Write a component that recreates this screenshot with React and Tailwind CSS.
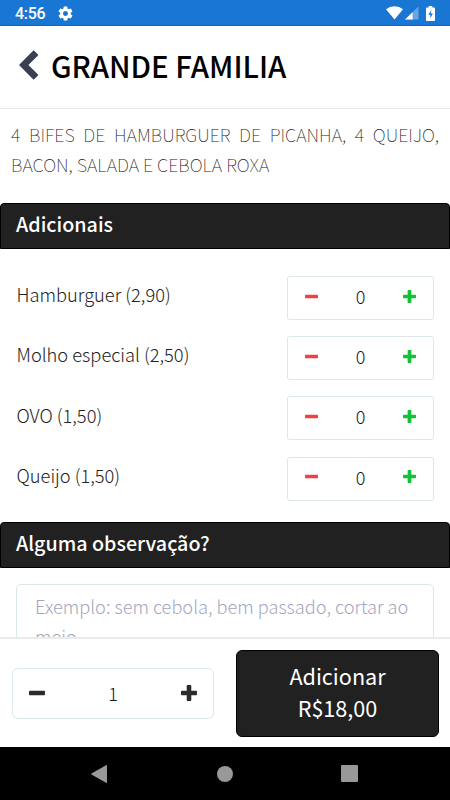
import React, { useState } from 'react';

const ADDONS = [
  { id: 1, name: 'Hamburguer (2,90)' },
  { id: 2, name: 'Molho especial (2,50)' },
  { id: 3, name: 'OVO (1,50)' },
  { id: 4, name: 'Queijo (1,50)' },
];

const MinusIcon = ({ className }) => (
  <svg viewBox="0 0 14 14" className={className} fill="currentColor">
    <rect x="0" y="5" width="14" height="4" rx="0.8" />
  </svg>
);

const PlusIcon = ({ className }) => (
  <svg viewBox="0 0 14 14" className={className} fill="currentColor">
    <path d="M5.8 0h2.4q.8 0 .8.8V5h4.2q.8 0 .8.8v2.4q0 .8-.8.8H9v4.2q0 .8-.8.8H5.8q-.8 0-.8-.8V9H.8Q0 9 0 8.2V5.8Q0 5 .8 5H5V.8Q5 0 5.8 0z" />
  </svg>
);

const StatusBar = () => (
  <div className="h-[26px] shrink-0 bg-[#1976d2] border-b border-[#1565c0] flex items-center text-white">
    <span className="ml-[15px] w-[31px] font-['Roboto'] font-medium text-[16px] leading-none mt-[3px] tracking-[-0.3px]">4:56</span>
    <svg viewBox="0 0 24 24" className="ml-[11px] mt-px w-[17px] h-[17px]" fill="currentColor">
      <path d="M19.43 12.98c.04-.32.07-.64.07-.98s-.03-.66-.07-.98l2.11-1.65c.19-.15.24-.42.12-.64l-2-3.46c-.12-.22-.39-.3-.61-.22l-2.49 1c-.52-.4-1.08-.73-1.69-.98l-.38-2.65C14.46 2.18 14.25 2 14 2h-4c-.25 0-.46.18-.49.42l-.38 2.65c-.61.25-1.17.59-1.69.98l-2.49-1c-.23-.09-.49 0-.61.22l-2 3.46c-.13.22-.07.49.12.64l2.11 1.65c-.04.32-.07.65-.07.98s.03.66.07.98l-2.11 1.65c-.19.15-.24.42-.12.64l2 3.46c.12.22.39.3.61.22l2.49-1c.52.4 1.08.73 1.69.98l.38 2.65c.03.24.24.42.49.42h4c.25 0 .46-.18.49-.42l.38-2.65c.61-.25 1.17-.59 1.69-.98l2.49 1c.23.09.49 0 .61-.22l2-3.46c.12-.22.07-.49-.12-.64l-2.11-1.65zM12 15.5c-1.93 0-3.5-1.57-3.5-3.5s1.57-3.5 3.5-3.5 3.5 1.57 3.5 3.5-1.57 3.5-3.5 3.5z" />
    </svg>
    <div className="ml-auto mr-[15px] mt-px flex items-center">
      <svg viewBox="0 0 17 14" className="w-[17px] h-[14px]" fill="currentColor">
        <path d="M8.5 13.5 0 3.2Q3.6.2 8.5.2T17 3.2z" />
      </svg>
      <svg viewBox="0 0 14 14" className="ml-[2px] w-[14px] h-[14px]" fill="currentColor">
        <path d="M13.5.5v13H0z" opacity="0.35" />
        <path d="M7.6 6.2v7.3H0z" />
      </svg>
      <svg viewBox="0 0 9 15" className="ml-[7px] w-[9px] h-[15px]">
        <path fill="currentColor" d="M2.7 0h3.6v1.5H8.2q.8 0 .8.8v11.9q0 .8-.8.8H.8q-.8 0-.8-.8V2.3q0-.8.8-.8h1.9z" />
        <path fill="#1976d2" d="M5.4 4 2.3 8.8h2V12.3L6.9 7.5H4.9z" />
      </svg>
    </div>
  </div>
);

const SectionTitle = ({ children }) => (
  <h2 className="h-[46px] shrink-0 rounded-t-[4px] border border-black bg-[#212121] px-[15px] text-white font-medium text-[19.7px] leading-[40px]">
    {children}
  </h2>
);

const AddonRow = ({ addon }) => {
  const [count, setCount] = useState(0);

  return (
    <div className="flex items-center justify-between h-[44px] pl-[16.5px] pr-4">
      <span className="text-[18.3px] text-[#222] font-light whitespace-nowrap -mt-[6px]">{addon.name}</span>
      <div className="flex items-center justify-between w-[147px] h-[44px] rounded-[3px] border border-[#dce7ea] px-[17px]">
        <button type="button" onClick={() => setCount(Math.max(0, count - 1))} className="text-[#f04040]">
          <MinusIcon className="w-[13px] h-[13px] -mt-[4px]" />
        </button>
        <span className="text-[18px] text-[#15152b] font-light -mt-[3px]">{count}</span>
        <button type="button" onClick={() => setCount(count + 1)} className="text-[#12c03a]">
          <PlusIcon className="w-[13px] h-[13px] -mt-[4px]" />
        </button>
      </div>
    </div>
  );
};

const App = () => {
  const [quantity, setQuantity] = useState(1);

  return (
    <div className="w-[450px] h-[800px] overflow-hidden flex flex-col bg-white font-['Noto_Sans_CJK_SC','Noto_Sans_CJK_JP',sans-serif]">
      <StatusBar />

      {/* Header */}
      <header className="h-[83px] shrink-0 border-b border-[#e9e9e9] flex items-center">
        <svg viewBox="0 0 20 30" className="ml-[19px] w-[20px] h-[30px] -mt-[5px]" fill="#3a3f51">
          <path d="M15.2.7 19 4.5Q19.3 5 19 5.4L9.4 15l9.6 9.5q.3.5 0 .9L15.2 29.2q-.6.4-1.1 0L.5 15.6q-.4-.6 0-1.2L14.1.7q.5-.4 1.1 0z" />
        </svg>
        <h1 className="ml-[12px] -mt-[3px] text-[29.4px] font-medium leading-none text-black whitespace-nowrap">GRANDE FAMILIA</h1>
      </header>

      <main className="flex-1 min-h-0 overflow-hidden flex flex-col">
        <p className="shrink-0 h-[94px] pt-[10px] px-[11px] text-justify text-[18px] leading-[30px] font-thin text-[#222]">
          4 BIFES DE HAMBURGUER DE PICANHA, 4 QUEIJO, BACON, SALADA E CEBOLA ROXA
        </p>

        <SectionTitle>Adicionais</SectionTitle>
        <div className="shrink-0 h-[273px] pt-[27px] flex flex-col gap-[16.200px]">
          {ADDONS.map((addon) => (
            <AddonRow key={addon.id} addon={addon} />
          ))}
        </div>

        <SectionTitle>Alguma observação?</SectionTitle>
        <div className="shrink-0 pt-4 px-4">
          <textarea
            className="block w-full h-[120px] resize-none rounded-[5px] border border-[#dce7ea] px-[18px] pt-[6px] text-[18.2px] leading-[30px] font-light placeholder:text-[#a3a6c0] outline-none overflow-hidden"
            placeholder="Exemplo: sem cebola, bem passado, cortar ao meio..."
          />
        </div>
      </main>

      {/* Order bar */}
      <footer className="h-[110px] shrink-0 border-t-2 border-[#ebebeb] bg-white flex items-center justify-between pl-[12px] pr-[11px]">
        <div className="flex items-center justify-between w-[202px] h-[51px] rounded-[6px] border border-[#dce7ea] px-[16px]">
          <button type="button" onClick={() => setQuantity(Math.max(1, quantity - 1))} className="text-[#2b2b2b]">
            <MinusIcon className="w-[16px] h-[16px]" />
          </button>
          <span className="text-[18px] text-[#15152b] font-light">{quantity}</span>
          <button type="button" onClick={() => setQuantity(quantity + 1)} className="text-[#2b2b2b]">
            <PlusIcon className="w-[16px] h-[16px]" />
          </button>
        </div>
        <button type="button" className="w-[203px] h-[87px] mt-px rounded-[6px] border border-black bg-[#212121] text-white text-[21.6px] leading-[32px] pb-[3px]">
          Adicionar
          <br />
          R$18,00
        </button>
      </footer>

      {/* Android navigation */}
      <nav className="h-[53px] shrink-0 bg-black flex items-center justify-center text-[#999]">
        <svg viewBox="0 0 16 18" className="-ml-[2px] w-[16px] h-[18px]" fill="currentColor">
          <path d="M15 .2q1-.4 1 .6v16.4q0 1-1 .6L.5 9.5Q0 9 .5 8.5z" />
        </svg>
        <span className="ml-[110px] w-[16px] h-[16px] rounded-full bg-[#999]" />
        <span className="ml-[108px] w-[17px] h-[17px] rounded-[1px] bg-[#999]" />
      </nav>
    </div>
  );
};

export default App;
